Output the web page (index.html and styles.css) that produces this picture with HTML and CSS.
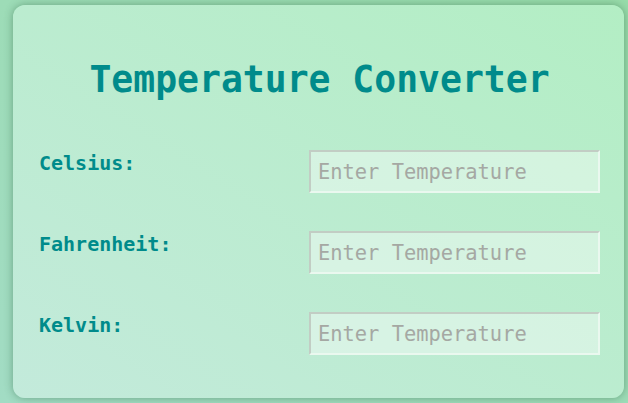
FILE: index.html
```html
<!DOCTYPE html>
<html>
<head>
<meta charset="utf-8">
<link rel="stylesheet" href="styles.css">
</head>
<body>
<div class="card">
  <h1 class="title">Temperature Converter</h1>
  <div class="rows">
    <div class="row">
      <label class="label" for="c">Celsius:</label>
      <input class="field" id="c" type="text" placeholder="Enter Temperature">
    </div>
    <div class="row">
      <label class="label" for="f">Fahrenheit:</label>
      <input class="field" id="f" type="text" placeholder="Enter Temperature">
    </div>
    <div class="row">
      <label class="label" for="k">Kelvin:</label>
      <input class="field" id="k" type="text" placeholder="Enter Temperature">
    </div>
  </div>
</div>
</body>
</html>
```
FILE: styles.css
```css
html, body {
  margin: 0;
  padding: 0;
}
body {
  width: 628px;
  height: 403px;
  background: linear-gradient(to top right, #a2dcc4, #98dcaa);
  font-family: "DejaVu Sans Mono", monospace;
  overflow: hidden;
  padding: 5px 4px 5px 13px;
  box-sizing: border-box;
}
.card {
  height: 393px;
  box-sizing: border-box;
  border-radius: 12px;
  background: linear-gradient(to top right, #c3eadb, #b3eec4);
  box-shadow: 0 0 8px rgba(40, 90, 60, 0.45);
  padding: 54px 24px 0 26px;
}
.title {
  margin: 0 0 49px 0;
  text-align: center;
  font-size: 36.4px;
  font-weight: bold;
  color: #008b8b;
  line-height: 42px;
}
.rows {
  display: flex;
  flex-direction: column;
  gap: 38px;
}
.row {
  display: flex;
  justify-content: space-between;
  align-items: flex-start;
}
.label {
  font-size: 20px;
  font-weight: bold;
  color: #008b8b;
  padding-top: 2px;
  line-height: 23px;
}
.field {
  width: 291px;
  height: 43px;
  box-sizing: border-box;
  margin: 0;
  padding: 0 7px;
  font-family: "DejaVu Sans Mono", monospace;
  font-size: 20.4px;
  background: rgba(255, 255, 255, 0.4);
  border: 2px solid;
  border-color: #c2cdc4 #eaf8ef #eaf8ef #c2cdc4;
  outline: none;
  color: #333;
}
.field::placeholder {
  color: #a5a8a3;
}
```
